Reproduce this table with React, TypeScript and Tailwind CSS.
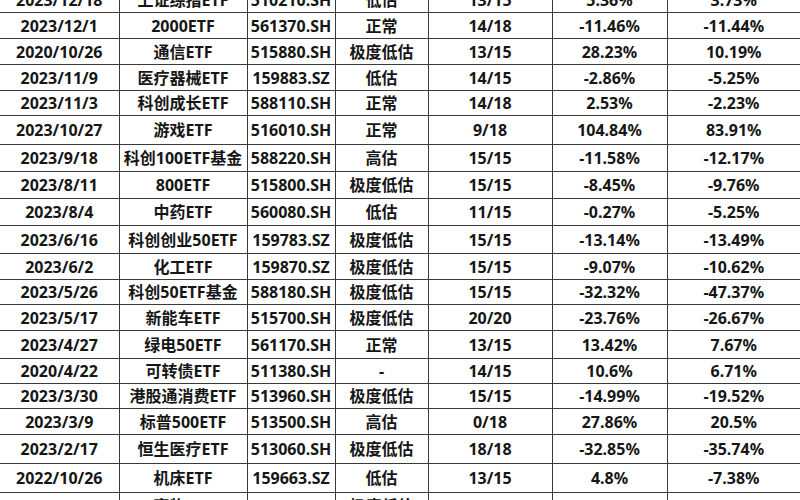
type Row = {
  h: string;
  date: string;
  name: string;
  code: string;
  status: string;
  score: string;
  ret: string;
  bench: string;
};

const rows: Row[] = [
  { h: "h-[26px]", date: "2023/12/18", name: "上证综指ETF", code: "510210.SH", status: "低估", score: "13/15", ret: "5.36%", bench: "3.73%" },
  { h: "h-[26px]", date: "2023/12/1", name: "2000ETF", code: "561370.SH", status: "正常", score: "14/18", ret: "-11.46%", bench: "-11.44%" },
  { h: "h-[26px]", date: "2020/10/26", name: "通信ETF", code: "515880.SH", status: "极度低估", score: "13/15", ret: "28.23%", bench: "10.19%" },
  { h: "h-[26px]", date: "2023/11/9", name: "医疗器械ETF", code: "159883.SZ", status: "低估", score: "14/15", ret: "-2.86%", bench: "-5.25%" },
  { h: "h-[25px]", date: "2023/11/3", name: "科创成长ETF", code: "588110.SH", status: "正常", score: "14/18", ret: "2.53%", bench: "-2.23%" },
  { h: "h-[29px]", date: "2023/10/27", name: "游戏ETF", code: "516010.SH", status: "正常", score: "9/18", ret: "104.84%", bench: "83.91%" },
  { h: "h-[27px]", date: "2023/9/18", name: "科创100ETF基金", code: "588220.SH", status: "高估", score: "15/15", ret: "-11.58%", bench: "-12.17%" },
  { h: "h-[27px]", date: "2023/8/11", name: "800ETF", code: "515800.SH", status: "极度低估", score: "15/15", ret: "-8.45%", bench: "-9.76%" },
  { h: "h-[27px]", date: "2023/8/4", name: "中药ETF", code: "560080.SH", status: "低估", score: "11/15", ret: "-0.27%", bench: "-5.25%" },
  { h: "h-[28px]", date: "2023/6/16", name: "科创创业50ETF", code: "159783.SZ", status: "极度低估", score: "15/15", ret: "-13.14%", bench: "-13.49%" },
  { h: "h-[26px]", date: "2023/6/2", name: "化工ETF", code: "159870.SZ", status: "极度低估", score: "15/15", ret: "-9.07%", bench: "-10.62%" },
  { h: "h-[25px]", date: "2023/5/26", name: "科创50ETF基金", code: "588180.SH", status: "极度低估", score: "15/15", ret: "-32.32%", bench: "-47.37%" },
  { h: "h-[26px]", date: "2023/5/17", name: "新能车ETF", code: "515700.SH", status: "极度低估", score: "20/20", ret: "-23.76%", bench: "-26.67%" },
  { h: "h-[28px]", date: "2023/4/27", name: "绿电50ETF", code: "561170.SH", status: "正常", score: "13/15", ret: "13.42%", bench: "7.67%" },
  { h: "h-[25px]", date: "2020/4/22", name: "可转债ETF", code: "511380.SH", status: "-", score: "14/15", ret: "10.6%", bench: "6.71%" },
  { h: "h-[25px]", date: "2023/3/30", name: "港股通消费ETF", code: "513960.SH", status: "极度低估", score: "15/15", ret: "-14.99%", bench: "-19.52%" },
  { h: "h-[26px]", date: "2023/3/9", name: "标普500ETF", code: "513500.SH", status: "高估", score: "0/18", ret: "27.86%", bench: "20.5%" },
  { h: "h-[29px]", date: "2023/2/17", name: "恒生医疗ETF", code: "513060.SH", status: "极度低估", score: "18/18", ret: "-32.85%", bench: "-35.74%" },
  { h: "h-[29px]", date: "2022/10/26", name: "机床ETF", code: "159663.SZ", status: "低估", score: "13/15", ret: "4.8%", bench: "-7.38%" },
  { h: "h-[26px]", date: "2023/1/13", name: "畜牧ETF", code: "159867.SZ", status: "极度低估", score: "16/20", ret: "-50.87%", bench: "-39.38%" },
];

const cell = "border border-[#3a3a3a] text-center align-middle p-0 whitespace-nowrap";

export default function App() {
  return (
    <div className="w-[800px] h-[500px] overflow-hidden bg-white">
      <table
        className="-mt-[14px] w-[800px] table-fixed border-collapse text-[16px] font-bold leading-none text-[#161616]"
        style={{ fontFamily: '"Noto Sans", "Noto Sans CJK SC", sans-serif' }}
      >
        <colgroup>
          <col className="w-[119px]" />
          <col className="w-[128px]" />
          <col className="w-[88px]" />
          <col className="w-[93px]" />
          <col className="w-[124px]" />
          <col className="w-[115px]" />
          <col className="w-[133px]" />
        </colgroup>
        <tbody>
          {rows.map((r) => (
            <tr key={r.date + r.code} className={r.h}>
              <td className={`${cell} border-l-0`}>{r.date}</td>
              <td className={cell}>{r.name}</td>
              <td className={cell}>{r.code}</td>
              <td className={cell}>{r.status}</td>
              <td className={cell}>{r.score}</td>
              <td className={cell}>{r.ret}</td>
              <td className={`${cell} border-r-0`}>{r.bench}</td>
            </tr>
          ))}
        </tbody>
      </table>
    </div>
  );
}
